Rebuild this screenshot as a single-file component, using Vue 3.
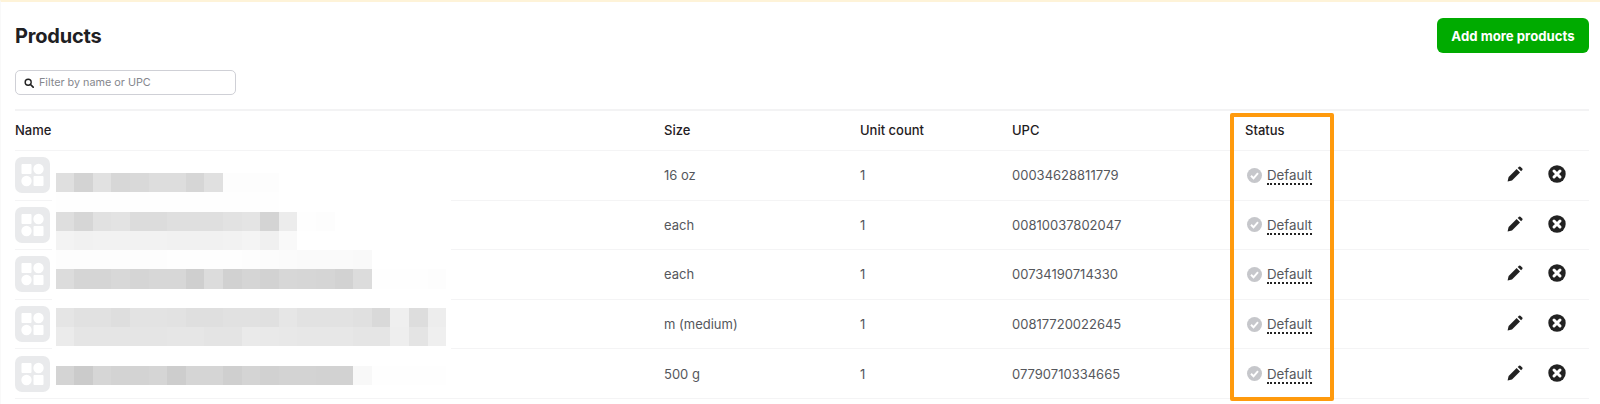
<script setup>
const products = [
  { size: '16 oz', units: 1, upc: '00034628811779' },
  { size: 'each', units: 1, upc: '00810037802047' },
  { size: 'each', units: 1, upc: '00734190714330' },
  { size: 'm (medium)', units: 1, upc: '00817720022645' },
  { size: '500 g', units: 1, upc: '07790710334665' }
]

// pixelated product names, one string of grey values per row of blocks
const mosaic = [
  'df d3 e1 d7 d9 dd dd d6 e0 fd fd fd',
  'fe fe fe fe fe fe fe fe fe fe fe fe',
  'de d6 e1 e3 dc dc df df df e2 e4 d4 ec fe fd',
  'f3 f1 f2 f2 f2 f2 f1 f1 f1 f2 f4 f0 f9',
  'fd fd fd fd fd fd fe fe fe fe fd fc fb fa fa fa f9',
  'dc d5 d5 d8 d5 d7 d7 cf dc d1 d5 d2 d7 d6 d5 d2 dc fe fe fe fd',
  '',
  'e5 e1 e1 de e3 e3 e2 df df e1 e1 e0 e6 e2 e2 e2 e0 d9 ef dd ed',
  'eb e5 e5 e5 e5 e5 e6 e6 e4 e4 ea e9 e8 e7 e7 e7 e5 e5 ee e4 ef',
  '',
  'd4 cb d6 d3 d3 d5 cd d5 d5 cf d4 d1 d3 d3 d2 d2 f8 fe fe fe fe'
].map((row) => (row ? row.split(' ') : []))
</script>

<template>
  <div class="page">
    <div class="top">
      <h1>Products</h1>
      <button class="add-btn">Add more products</button>
    </div>

    <div class="filter">
      <svg class="search-icon" viewBox="0 0 12 12" width="10" height="10">
        <circle cx="5" cy="5" r="3.6" fill="none" stroke="#222" stroke-width="1.7" />
        <path d="M7.8 7.8 11 11" stroke="#222" stroke-width="2" stroke-linecap="round" />
      </svg>
      <input type="text" placeholder="Filter by name or UPC" />
    </div>

    <div class="table">
      <div class="row head">
        <div class="col-name">Name</div>
        <div class="col-size">Size</div>
        <div class="col-units">Unit count</div>
        <div class="col-upc">UPC</div>
        <div class="col-status">Status</div>
      </div>

      <div class="row item" v-for="p in products" :key="p.upc">
        <div class="col-name">
          <svg class="thumb" viewBox="0 0 35 36" width="35" height="36">
            <rect width="35" height="36" rx="7" fill="#e9eaec" />
            <rect x="6.5" y="7" width="10" height="10" rx="1" fill="#fff" />
            <circle cx="23.5" cy="12" r="5.2" fill="#fff" />
            <circle cx="11.5" cy="24" r="5.2" fill="#fff" />
            <rect x="18.5" y="19" width="10" height="10" rx="1" fill="#fff" />
          </svg>
        </div>
        <div class="col-size">{{ p.size }}</div>
        <div class="col-units">{{ p.units }}</div>
        <div class="col-upc">{{ p.upc }}</div>
        <div class="col-status">
          <svg class="check" viewBox="0 0 15 15" width="15" height="15">
            <circle cx="7.5" cy="7.5" r="7.5" fill="#c6c7cb" />
            <path d="M4 7.8 6.5 10.3 11 5.2" fill="none" stroke="#fff" stroke-width="2" />
          </svg>
          <span class="default">Default</span>
        </div>
        <div class="col-actions">
          <svg class="pencil" viewBox="0 0 16 16" width="16" height="16">
            <path d="M0.6 15.4 1.6 11 9.6 3 13 6.4 5 14.4Z" fill="#222" />
            <path d="M10.7 1.9 12 0.7Q12.7 0.1 13.4 0.7L15.3 2.6Q15.9 3.3 15.3 4L14.1 5.3Z" fill="#222" />
          </svg>
          <svg class="remove" viewBox="0 0 18 18" width="18" height="18">
            <circle cx="9" cy="9" r="8.7" fill="#222" />
            <path d="M6 6 12 12M12 6 6 12" stroke="#fff" stroke-width="3" stroke-linecap="round" />
          </svg>
        </div>
      </div>

      <div class="mosaic">
        <div class="mosaic-row" v-for="(cells, i) in mosaic" :key="i">
          <i v-for="(c, j) in cells" :key="j" :style="{ background: '#' + c + c + c }"></i>
        </div>
      </div>
    </div>

    <div class="highlight"></div>
  </div>
</template>

<style scoped>
.page {
  position: relative;
  box-sizing: border-box;
  width: 1600px;
  height: 404px;
  overflow: hidden;
  padding: 16px 11px 0 14px;
  background: #fff;
  border-top: 2px solid #fef3d8;
  border-left: 1px solid #f9f9f9;
  font-family: Inter, "Liberation Sans", sans-serif;
  color: #1f2023;
}
.top {
  display: flex;
  justify-content: space-between;
  align-items: center;
  height: 35px;
}
h1 {
  margin: 0;
  font-size: 20px;
  font-weight: 700;
  letter-spacing: -0.2px;
}
.add-btn {
  width: 152px;
  height: 35px;
  border: none;
  border-radius: 6px;
  background: #00ab00;
  color: #fff;
  font-family: inherit;
  font-size: 13.2px;
  font-weight: 700;
}
.filter {
  display: flex;
  align-items: center;
  gap: 5px;
  box-sizing: border-box;
  width: 221px;
  height: 25px;
  margin-top: 17px;
  padding-left: 8px;
  border: 1px solid #cfd0d6;
  border-radius: 5px;
}
.filter input {
  flex: 1;
  min-width: 0;
  border: none;
  outline: none;
  padding: 0;
  font-family: inherit;
  font-size: 10.8px;
}
.filter input::placeholder {
  color: #85878d;
}
.table {
  position: relative;
  margin-top: 14px;
  border-top: 2px solid #f3f3f4;
}
.row {
  display: flex;
  align-items: center;
  box-sizing: border-box;
  border-bottom: 1px solid #f4f4f5;
  font-size: 13px;
}
.head {
  height: 40px;
  padding-bottom: 2px;
  font-weight: 500;
}
.item {
  height: 49.6px;
  color: #55575c;
}
.col-name {
  display: flex;
  align-items: center;
  width: 649px;
}
.col-size {
  width: 196px;
}
.col-units {
  width: 152px;
}
.col-upc {
  width: 233px;
}
.col-status {
  display: flex;
  align-items: center;
  gap: 5px;
  width: 240px;
}
.check {
  margin-left: 2px;
}
.col-actions {
  display: flex;
  align-items: center;
  gap: 25px;
  margin-left: 22px;
  margin-top: -2px;
}
.default {
  margin-top: 3px;
  line-height: 15px;
  border-bottom: 2px dotted #222;
  font-size: 13.3px;
}
.mosaic {
  position: absolute;
  left: 37px;
  top: 57px;
  box-sizing: border-box;
  width: 399px;
  padding: 5px 0 0 3.7px;
  background: #fff;
}
.mosaic-row {
  display: flex;
  height: 19.25px;
}
.mosaic-row i {
  display: block;
  flex: 0 0 18.6px;
}
.highlight {
  position: absolute;
  left: 1229px;
  top: 111px;
  width: 104px;
  height: 288px;
  box-sizing: border-box;
  border: 4px solid #ff9a0d;
  border-radius: 2px;
}
</style>
